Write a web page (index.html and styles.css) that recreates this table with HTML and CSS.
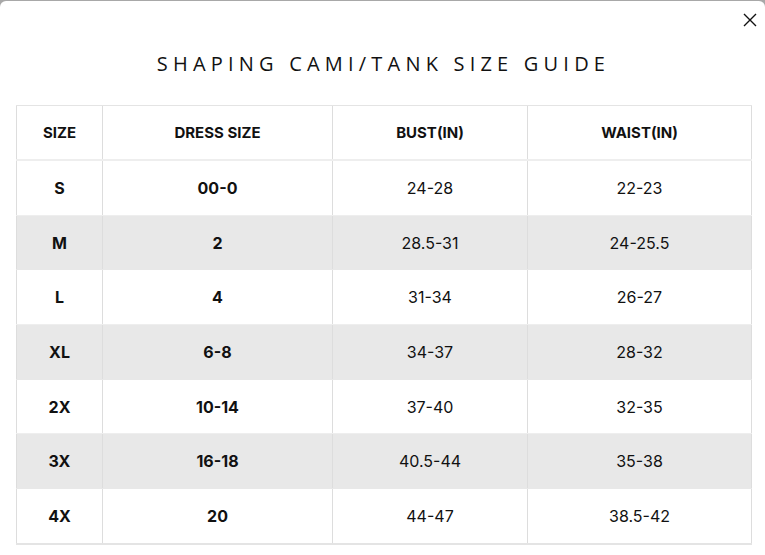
FILE: index.html
```html
<!DOCTYPE html>
<html>
<head>
<meta charset="utf-8">
<link rel="stylesheet" href="styles.css">
</head>
<body>
<div class="modal">
  <button class="close" aria-label="Close">
    <svg width="14" height="14" viewBox="0 0 14 14"><path d="M1 1L13 13M13 1L1 13" stroke="#111" stroke-width="1.4" fill="none"/></svg>
  </button>
  <h1 class="title">SHAPING CAMI/TANK SIZE GUIDE</h1>
  <table class="guide">
    <colgroup>
      <col class="c1"><col class="c2"><col class="c3"><col class="c4">
    </colgroup>
    <thead>
      <tr><th>SIZE</th><th>DRESS SIZE</th><th>BUST(IN)</th><th>WAIST(IN)</th></tr>
    </thead>
    <tbody>
      <tr><td class="b">S</td><td class="b">00-0</td><td>24-28</td><td>22-23</td></tr>
      <tr class="alt"><td class="b">M</td><td class="b">2</td><td>28.5-31</td><td>24-25.5</td></tr>
      <tr><td class="b">L</td><td class="b">4</td><td>31-34</td><td>26-27</td></tr>
      <tr class="alt"><td class="b">XL</td><td class="b">6-8</td><td>34-37</td><td>28-32</td></tr>
      <tr><td class="b">2X</td><td class="b">10-14</td><td>37-40</td><td>32-35</td></tr>
      <tr class="alt"><td class="b">3X</td><td class="b">16-18</td><td>40.5-44</td><td>35-38</td></tr>
      <tr><td class="b">4X</td><td class="b">20</td><td>44-47</td><td>38.5-42</td></tr>
    </tbody>
  </table>
</div>
</body>
</html>
```
FILE: styles.css
```css
html, body {
  margin: 0;
  padding: 0;
  background: #a8a8a8;
  height: 555px;
  overflow: hidden;
}
.modal {
  position: relative;
  margin-top: 1px;
  height: 554px;
  background: #fff;
  border-radius: 6px 6px 0 0;
  padding: 0 14px 0 16px;
  box-sizing: border-box;
}
.close {
  position: absolute;
  top: 12px;
  right: 8px;
  border: 0;
  background: none;
  padding: 0;
  width: 14px;
  height: 14px;
  line-height: 0;
}
.title {
  margin: 0;
  padding-top: 50px;
  height: 54px;
  text-align: center;
  font-family: "Open Sans", sans-serif;
  font-weight: 400;
  font-size: 20px;
  line-height: 26px;
  letter-spacing: 5.2px;
  color: #111;
}
.guide {
  width: 735px;
  border-collapse: collapse;
  table-layout: fixed;
  font-family: Inter, "Open Sans", sans-serif;
  color: #111;
  border-left: 1px solid #ddd;
  border-right: 1px solid #ddd;
}
.c1 { width: 86px; }
.c2 { width: 230px; }
.c3 { width: 195px; }
.c4 { width: 224px; }
.guide th, .guide td {
  text-align: center;
  border-left: 1px solid #ddd;
  padding: 0;
}
.guide th {
  height: 53px;
  font-size: 15px;
  font-weight: 700;
  border-top: 1px solid #e4e4e4;
  border-bottom: 2px solid #eee;
}
.guide td {
  height: 53.7px;
  font-size: 16px;
  font-weight: 400;
  border-bottom: 1px solid #eee;
}
.guide td.b {
  font-weight: 700;
}
.guide tr.alt td {
  background: #e8e8e8;
  border-bottom-color: #e8e8e8;
}
.guide tbody tr:last-child td {
  border-bottom: 2px solid #e4e4e4;
}
```
